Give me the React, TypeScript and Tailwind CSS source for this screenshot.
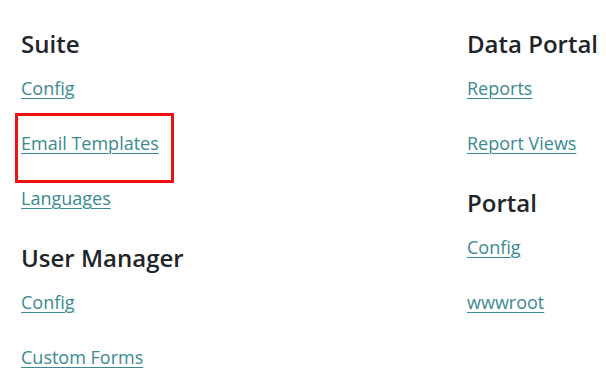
import React from "react";

const font = { fontFamily: '"Open Sans", "Noto Sans", "Liberation Sans", sans-serif' };

function Heading({ children, first }: { children: React.ReactNode; first?: boolean }) {
  return (
    <h3 className={`text-[24px] leading-[30px] font-semibold text-[#212529] mb-[16px] ${first ? "" : "mt-[3px]"}`}>
      {children}
    </h3>
  );
}

function Link({ children, boxed }: { children: React.ReactNode; boxed?: boolean }) {
  return (
    <div className="relative h-[27px] mb-[28px]">
      <a href="#" className="text-[18px] leading-[27px] text-[#3a8a90] underline underline-offset-[3px] decoration-1 whitespace-nowrap">
        {children}
      </a>
      {boxed && (
        <div className="absolute left-[-6px] top-[-17px] w-[159px] h-[70px] border-[3px] border-[#ee1111]" />
      )}
    </div>
  );
}

export default function App() {
  return (
    <div className="w-[606px] h-[384px] bg-white overflow-hidden flex pt-[29px] pl-[21px]" style={font}>
      <div className="w-[446px] flex flex-col">
        <Heading first>Suite</Heading>
        <Link>Config</Link>
        <Link boxed>Email Templates</Link>
        <Link>Languages</Link>
        <Heading>User Manager</Heading>
        <Link>Config</Link>
        <Link>Custom Forms</Link>
      </div>
      <div className="flex flex-col">
        <Heading first>Data Portal</Heading>
        <Link>Reports</Link>
        <Link>Report Views</Link>
        <Heading>Portal</Heading>
        <Link>Config</Link>
        <Link>wwwroot</Link>
      </div>
    </div>
  );
}
